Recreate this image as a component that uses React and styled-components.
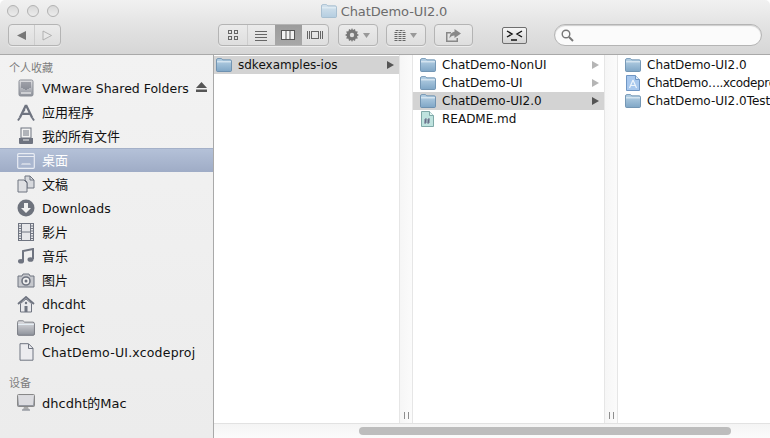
import React from "react";
import styled, { createGlobalStyle } from "styled-components";

const Global = createGlobalStyle`
  html, body { margin: 0; padding: 0; background: #fff; }
  #root { width: 770px; height: 438px; overflow: hidden; }
`;
const FONT = `"DejaVu Sans", "Noto Sans CJK SC", sans-serif`;

const Win = styled.div`
  width: 770px; height: 438px; display: flex; flex-direction: column; overflow: hidden;
  font-family: ${FONT}; font-size: 12px; color: #111; background: #fff;
`;
const Head = styled.header`
  height: 55px; flex: none; box-sizing: border-box; border-bottom: 1px solid #a9a9a9;
  background: linear-gradient(#f1f1f1, #e2e2e2 50%, #d6d6d6); border-radius: 5px 5px 0 0;
  display: flex; flex-direction: column;
`;
const TitleBar = styled.div`
  height: 22px; flex: none; display: grid; grid-template-columns: 1fr auto 1fr; align-items: center; padding-right: 2px;
`;
const Lights = styled.div`display: flex; gap: 8px; margin-left: 7px;`;
const Light = styled.span`
  width: 10px; height: 10px; border-radius: 50%; border: 1px solid #b2b2b2;
  background: linear-gradient(#d8d8d8, #ececec);
`;
const Title = styled.div`
  display: flex; align-items: center; gap: 4px; font-size: 13px; letter-spacing: -.1px; color: #6c6c6c;
`;
const Tools = styled.div`
  flex: 1; display: flex; align-items: flex-start; padding: 2px 8px 0;
`;
const Seg = styled.div`
  height: 22px; display: flex; box-sizing: border-box; border: 1px solid #b4b4b4; border-radius: 4px;
  background: linear-gradient(#ebebeb, #dedede); overflow: hidden; margin-left: ${p => p.$ml || 0}px;
  box-shadow: 0 1px 0 rgba(255,255,255,.5);
`;
const SegBtn = styled.div`
  width: ${p => p.$w}px; display: flex; align-items: center; justify-content: center; gap: 4px; box-sizing: border-box;
  background: ${p => (p.$on ? "linear-gradient(#9c9c9c, #a8a8a8)" : "transparent")};
  border-right: ${p => (p.$sep ? "1px solid #cdcdcd" : "0")};
`;
const Terminal = styled.div`
  margin-left: 29px; margin-top: 3px; width: 25px; height: 17px; box-sizing: border-box; border: 1px solid #6f6f6f; border-radius: 2px;
  background: linear-gradient(#f6f6f6, #d4d4d4); display: flex; align-items: center; justify-content: center;
`;
const Search = styled.div`
  margin-left: 27px; width: 208px; height: 22px; box-sizing: border-box; border: 1px solid #b4b4b4; border-radius: 11px;
  background: #fbfbfb; display: flex; align-items: center; padding-left: 6px; box-shadow: inset 0 1px 1px #ccc;
`;
const Body = styled.div`flex: 1; min-height: 0; display: flex;`;
const Side = styled.nav`
  width: 214px; flex: none; box-sizing: border-box; border-right: 1px solid #a9a9a9;
  background: linear-gradient(#f2f2f2, #ececec); padding-top: 4px; display: flex; flex-direction: column;
`;
const Group = styled.div`
  height: 16px; display: flex; align-items: center; padding-left: 9px; font-size: 11px; color: #7d7d7d;
  margin-top: ${p => p.$mt || 0}px; margin-bottom: ${p => p.$mb || 0}px;
`;
const IconBox = styled.span`width: 18px; height: 18px; flex: none; display: flex; align-items: center; justify-content: center;`;
const SideRow = styled.div`
  height: 24px; flex: none; display: flex; align-items: center; box-sizing: border-box; padding-left: 17px; gap: 7px; position: relative;
  padding-bottom: ${p => (p.$flat ? 0 : 2)}px;
  font-size: 13px; white-space: nowrap;
  color: ${p => (p.$on ? "#fff" : "#111")};
  background: ${p => (p.$on ? "linear-gradient(#b4c1d8, #9facc6)" : "transparent")};
  border-top: ${p => (p.$on ? "1px solid #a4b0c8" : "0")};
  ${IconBox} { margin-top: ${p => (p.$flat ? 0 : 2)}px; }
`;
const LatinLabel = styled.span`
  font-size: 12.5px; padding-top: 2px; letter-spacing: ${p => p.$ls || 0}px;
`;
const Eject = styled.span`
  position: absolute; left: 196px; top: 6px; display: flex;
`;
const Main = styled.main`flex: 1; min-width: 0; display: flex; flex-direction: column;`;
const Cols = styled.div`flex: 1; min-height: 0; display: flex;`;
const Col = styled.section`width: ${p => p.$w}px; flex: none; padding-top: 1px;`;
const Row = styled.div`
  height: 18px; display: flex; align-items: center; box-sizing: border-box;
  padding-left: ${p => p.$pl ?? 7}px; gap: ${p => p.$gap ?? 6}px; position: relative;
  letter-spacing: ${p => p.$ls || 0}px;
  background: ${p => (p.$on ? "#d3d3d3" : "transparent")}; white-space: nowrap; overflow: hidden;
  svg { flex: none; }
`;
const Arrow = styled.span`
  position: absolute; right: 5px; top: 5px; width: 0; height: 0; border-left: 7px solid ${p => (p.$on ? "#555" : "#b5b5b5")};
  border-top: 4px solid transparent; border-bottom: 4px solid transparent;
`;
const Resizer = styled.div`
  width: 14px; flex: none; box-sizing: border-box; border-left: 1px solid #e6e6e6; border-right: 1px solid #e6e6e6;
  background: linear-gradient(90deg, #f6f6f6, #fbfbfb); display: flex; justify-content: center; align-items: flex-end; gap: 3px; padding-bottom: 4px;
`;
const Grip = styled.i`width: 1px; height: 7px; background: #8e8e8e;`;
const HScroll = styled.div`
  height: 15px; flex: none; box-sizing: border-box; border-top: 1px solid #e2e2e2; background: linear-gradient(#f4f4f4, #fbfbfb);
  padding: 3px 0 0 145px;
`;
const Thumb = styled.div`width: 372px; height: 8px; border-radius: 4px; background: #bdbdbd;`;

const Defs = () => (
  <svg width="0" height="0" style={{ position: "absolute" }}>
    <defs>
      <linearGradient id="fb" x1="0" y1="0" x2="0" y2="1"><stop offset="0" stopColor="#b9d3e6" /><stop offset="1" stopColor="#7fa6c6" /></linearGradient>
      <linearGradient id="ft" x1="0" y1="0" x2="0" y2="1"><stop offset="0" stopColor="#d6e4ee" /><stop offset="1" stopColor="#b4cde0" /></linearGradient>
      <linearGradient id="gr" x1="0" y1="0" x2="0" y2="1"><stop offset="0" stopColor="#e0e0e3" /><stop offset="1" stopColor="#8d919a" /></linearGradient>
    </defs>
  </svg>
);
const Folder = ({ w = 16, h = 14, fill = "url(#fb)", line = "#5f86a8" }) => (
  <svg width={w} height={h} viewBox="0 0 16 14">
    <path d="M.5 12.5V2c0-.8.5-1.4 1.3-1.4h3.4c.7 0 1 .8 1.6 1.2h7.4c.8 0 1.3.6 1.3 1.3v9.4c0 .6-.4 1-1 1H1.5c-.6 0-1-.4-1-1z" fill={fill} stroke={line} strokeWidth=".8" />
    <path d="M1 3.8h14" stroke="#e6f0f7" strokeWidth="1" />
  </svg>
);
const G = "#6f7480";
const icons = {
  drive: <svg width="16" height="18" viewBox="0 0 16 18"><rect x="1" y="1" width="14" height="16" rx="1.5" fill="url(#gr)" stroke="#8a8e96" /><path d="M4 3v6M6 3v7M8 3v8M10 3v7M12 3v6" stroke="#666b76" /><path d="M3 14h10" stroke="#fff" /></svg>,
  apps: <svg width="19" height="19" viewBox="0 0 19 19"><path d="M9.500 1.500L3 15M9.500 1.500L16 15M5 11h9" fill="none" stroke={G} strokeWidth="2.400" /><path d="M1 18l2-3M18 18l-2-3M6.500 6.500l2 1" stroke={G} strokeWidth="2" /></svg>,
  all: <svg width="16" height="18" viewBox="0 0 16 18"><rect x="3" y="1" width="10" height="10" fill="#f2f2f2" stroke={G} /><path d="M5 4h6M5 6h6M5 8h6" stroke={G} /><path d="M1 11h14v5a1 1 0 0 1-1 1H2a1 1 0 0 1-1-1z" fill={G} /><path d="M5 13h6" stroke="#eee" /></svg>,
  desk: <svg width="18" height="16" viewBox="0 0 18 16"><rect x=".7" y=".7" width="16.600" height="14.600" rx="1" fill="#a9b6cf" stroke="#e8ecf3" strokeWidth="1.200" /><path d="M1 3.500h16" stroke="#e8ecf3" /><path d="M4 12l1-2h8l1 2z" fill="#cfd6e4" /></svg>,
  docs: <svg width="18" height="18" viewBox="0 0 18 18"><path d="M8 1h5l4 4v8H10V7L8 5z" fill="#d7d9dd" stroke={G} /><path d="M1 5h6l3 3v9H1z" fill="#dfe0e3" stroke={G} /><path d="M13 1v4h4" fill="none" stroke={G} /></svg>,
  down: <svg width="18" height="18" viewBox="0 0 18 18"><circle cx="9" cy="9" r="8.500" fill="#6e737d" /><path d="M7 4h4v5h3l-5 5-5-5h3z" fill="#f1f1f1" /></svg>,
  film: <svg width="16" height="18" viewBox="0 0 16 18"><rect x=".5" y=".5" width="15" height="17" fill="#e6e7ea" stroke={G} /><path d="M3.500 1v16M12.500 1v16M1 3h2M1 5.500h2M1 8h2M1 10.500h2M1 13h2M1 15.500h2M13 3h2M13 5.500h2M13 8h2M13 10.500h2M13 13h2M13 15.500h2M4 9h8" stroke={G} /></svg>,
  music: <svg width="16" height="16" viewBox="0 0 16 16"><path d="M5 13V3l10-2v10" fill="none" stroke={G} strokeWidth="2" /><ellipse cx="3" cy="13.300" rx="3" ry="2.300" fill={G} /><ellipse cx="12.500" cy="11.500" rx="3" ry="2.300" fill={G} /></svg>,
  cam: <svg width="18" height="15" viewBox="0 0 18 15"><path d="M1 3h4l1-2h6l1 2h4v11H1z" fill="#c6c8cd" stroke={G} /><circle cx="9" cy="8" r="4" fill="#f0f0f0" stroke={G} strokeWidth="1.600" /><circle cx="9" cy="8" r="1.500" fill={G} /></svg>,
  home: <svg width="18" height="17" viewBox="0 0 18 17"><path d="M1 8l8-7 8 7" fill="none" stroke={G} strokeWidth="1.800" /><path d="M3.500 7.500V16h11V7.500L9 3z" fill="#e9e9ec" stroke={G} /><rect x="7.500" y="10" width="3" height="6" fill={G} /><circle cx="9" cy="7" r="1.200" fill={G} /></svg>,
  folder: <Folder w={18} h={16} fill="url(#gr)" line="#70747c" />,
  doc: <svg width="15" height="18" viewBox="0 0 15 18"><path d="M1 .7h8.500l4.500 4.500v12H1z" fill="#ececef" stroke={G} /><path d="M9.500 1v4.500H14" fill="none" stroke={G} /></svg>,
  mac: <svg width="18" height="17" viewBox="0 0 18 17"><rect x=".5" y=".5" width="17" height="12" rx="1" fill="url(#gr)" stroke="#888" /><rect x="2" y="2" width="14" height="9" fill="#dcdce0" /><path d="M7 13h4l1 2.500H6z" fill="#aaa" /><path d="M5 16h8" stroke={G} /></svg>,
};

const favs = [
  { k: "drive", t: "VMware Shared Folders", latin: true },
  { k: "apps", t: "应用程序" },
  { k: "all", t: "我的所有文件" },
  { k: "desk", t: "桌面", on: true },
  { k: "docs", t: "文稿" },
  { k: "down", t: "Downloads", latin: true },
  { k: "film", t: "影片" },
  { k: "music", t: "音乐" },
  { k: "cam", t: "图片" },
  { k: "home", t: "dhcdht", latin: true },
  { k: "folder", t: "Project", latin: true },
  { k: "doc", t: "ChatDemo-UI.xcodeproj", latin: true, ls: 0.2 },
];

const MdIcon = () => (
  <svg width="13" height="16" viewBox="0 0 13 16"><path d="M.5.5h8l4 4v11H.5z" fill="#bfe3df" stroke="#7fa9a8" /><path d="M8.500.5v4h4" fill="#e6f5f3" stroke="#7fa9a8" /><path d="M5 7l-1 6M8 7l-1 6M3 9h6M3 11h6" stroke="#557" strokeWidth=".8" /></svg>
);
const ProjIcon = () => (
  <svg width="14" height="16" viewBox="0 0 14 16"><path d="M.5.5h9l4 4v11H.5z" fill="#a8c8ee" stroke="#6f96c4" /><path d="M9.500.5v4h4" fill="#dbe9f8" stroke="#6f96c4" /><path d="M7 5l-3.500 8M7 5l3.500 8M4.500 10.500h5" stroke="#eef5fc" strokeWidth="1.200" fill="none" /></svg>
);

export default function App() {
  return (
    <Win>
      <Global />
      <Defs />
      <Head>
        <TitleBar>
          <Lights><Light /><Light /><Light /></Lights>
          <Title><Folder fill="url(#ft)" line="#9db8cc" />ChatDemo-UI2.0</Title>
          <span />
        </TitleBar>
        <Tools>
          <Seg>
            <SegBtn $w={26} $sep><svg width="11" height="11"><path d="M10 1L1 5.500l9 4.500z" fill="#777" /></svg></SegBtn>
            <SegBtn $w={25}><svg width="11" height="11"><path d="M1 1l8.500 4.500L1 10z" fill="#e8e8e8" stroke="#a5a5a5" strokeWidth=".8" /></svg></SegBtn>
          </Seg>
          <Seg $ml={157}>
            <SegBtn $w={29} $sep><svg width="12" height="12" fill="none" stroke="#666"><rect x="1.500" y="1.500" width="3" height="3" /><rect x="7.500" y="1.500" width="3" height="3" /><rect x="1.500" y="7.500" width="3" height="3" /><rect x="7.500" y="7.500" width="3" height="3" /></svg></SegBtn>
            <SegBtn $w={27}><svg width="12" height="11" stroke="#666"><path d="M0 1.500h12M0 4.500h12M0 7.500h12M0 10.500h12" /></svg></SegBtn>
            <SegBtn $w={27} $on><svg width="14" height="10" fill="#f2f2f2" stroke="#555"><rect x=".5" y=".5" width="13" height="9" /><path d="M5 1v8M9 1v8" /></svg></SegBtn>
            <SegBtn $w={26}><svg width="16" height="10" fill="none" stroke="#666"><path d="M.5 1v8M2.500 1v8M13.500 1v8M15.500 1v8" /><rect x="4.500" y="1.500" width="7" height="7" /></svg></SegBtn>
          </Seg>
          <Seg $ml={9}>
            <SegBtn $w={38}>
              <svg width="14" height="14" viewBox="0 0 14 14"><path d="M7 0l1 2 2-1 .5 2.300 2.300.2-.8 2.200L14 7l-2 1.300.8 2.200-2.300.2L10 13l-2-1-1 2-1-2-2 1-.5-2.300-2.300-.2.800-2.200L0 7l2-1.300-.8-2.200 2.300-.2L4 1l2 1z" fill="#777" /><circle cx="7" cy="7" r="2.200" fill="#ddd" /></svg>
              <svg width="7" height="5"><path d="M0 0h7L3.500 5z" fill="#999" /></svg>
            </SegBtn>
          </Seg>
          <Seg $ml={8}>
            <SegBtn $w={38}>
              <svg width="12" height="11" stroke="#666" fill="none"><path d="M1.500.5h9M.5 2.500h11M.5 4.500h11M.5 6.500h11M.5 8.500h11M.5 10.500h11" strokeDasharray="3 1" /></svg>
              <svg width="7" height="5"><path d="M0 0h7L3.500 5z" fill="#999" /></svg>
            </SegBtn>
          </Seg>
          <Seg $ml={8}>
            <SegBtn $w={38}>
              <svg width="16" height="13" viewBox="0 0 16 13"><path d="M1 3h5v1.500H2.500v7h9V9H13v4H1z" fill="#888" /><path d="M9.500 0L16 4.500 9.500 9V6.500C7 6.500 5.500 7.500 4.500 9.500 4.500 6 6.500 3 9.500 2.800z" fill="#888" /></svg>
            </SegBtn>
          </Seg>
          <Terminal>
            <svg width="17" height="11" viewBox="0 0 17 11" fill="none" stroke="#111" strokeWidth="1.400"><path d="M1 1l5 3-5 3M16 1l-5 3 5 3M5 10h6" /></svg>
          </Terminal>
          <Search>
            <svg width="13" height="13" viewBox="0 0 13 13" fill="none" stroke="#777" strokeWidth="1.400"><circle cx="5" cy="5" r="3.800" /><path d="M8 8l4 4" strokeWidth="2" /></svg>
          </Search>
        </Tools>
      </Head>
      <Body>
        <Side>
          <Group $mb={1}>个人收藏</Group>
          {favs.map(({ k, t, on, latin, ls }) => (
            <SideRow key={t} $on={on}>
              <IconBox>{icons[k]}</IconBox>
              {latin ? <LatinLabel $ls={ls}>{t}</LatinLabel> : t}
              {k === "drive" && (
                <Eject><svg width="11" height="10"><path d="M5.500 0L11 6H0zM0 7.500h11V10H0z" fill="#555" /></svg></Eject>
              )}
            </SideRow>
          ))}
          <Group $mt={10}>设备</Group>
          <SideRow $flat><IconBox>{icons.mac}</IconBox>dhcdht的Mac</SideRow>
        </Side>
        <Main>
          <Cols>
            <Col $w={185}>
              <Row $on $pl={2}><Folder />sdkexamples-ios<Arrow $on /></Row>
            </Col>
            <Resizer><Grip /><Grip /></Resizer>
            <Col $w={191}>
              <Row><Folder />ChatDemo-NonUI<Arrow /></Row>
              <Row><Folder />ChatDemo-UI<Arrow /></Row>
              <Row $on><Folder />ChatDemo-UI2.0<Arrow $on /></Row>
              <Row $pl={8} $gap={8}><MdIcon />README.md</Row>
            </Col>
            <Resizer><Grip /><Grip /></Resizer>
            <Col $w={152}>
              <Row><Folder />ChatDemo-UI2.0</Row>
              <Row $pl={8} $gap={7} $ls={-0.35}><ProjIcon />ChatDemo….xcodeproj</Row>
              <Row><Folder />ChatDemo-UI2.0Tests</Row>
            </Col>
          </Cols>
          <HScroll><Thumb /></HScroll>
        </Main>
      </Body>
    </Win>
  );
}
